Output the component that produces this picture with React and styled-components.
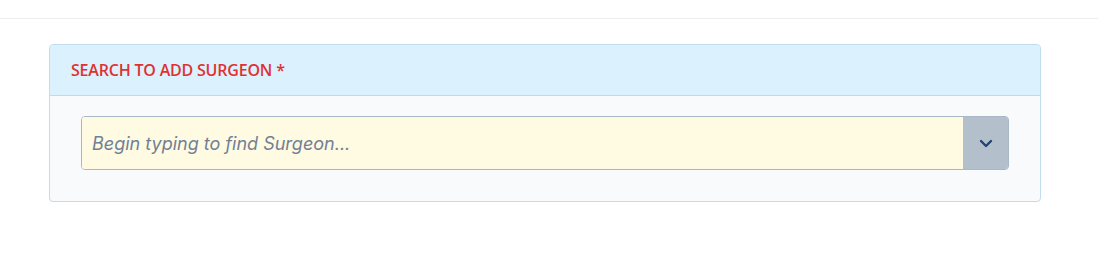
import styled, {createGlobalStyle} from "styled-components";

const GlobalStyle = createGlobalStyle`
    html, body {
        margin:0;
        padding:0;
        background:#ffffff;
    }
`;

const Page = styled.div`
    width:1098px;
    min-height:274px;
    background:#ffffff;
`;

const TopBar = styled.div`
    height:18px;
    border-bottom:1px solid #ededed;
`;

const Content = styled.div`
    padding:25px 57px 0 49px;
`;

const Card = styled.div`
    border:1px solid #bfdcf0;
    border-radius:4px;
    overflow:hidden;
    background:#f8fafc;
`;

const CardHeader = styled.div`
    height:50px;
    display:flex;
    align-items:center;
    padding:0 21px;
    background:#dbf1fd;
    border-bottom:1px solid #bddcf0;
`;

const CardTitle = styled.div`
    font-family:"Open Sans", "Noto Sans", sans-serif;
    font-weight:600;
    font-size:16px;
    letter-spacing:-0.2px;
    text-transform:uppercase;
    color:#e03131;
`;

const CardBody = styled.div`
    padding:20px 31px 31px;
`;

const SelectBox = styled.div`
    display:flex;
    height:54px;
    border:1px solid #a9b7c6;
    border-radius:4px;
    overflow:hidden;
    box-sizing:border-box;
`;

const SearchInput = styled.input`
    flex:1;
    border:none;
    outline:none;
    padding:0 10px;
    background:#fffbe3;
    font-family:Inter, "Noto Sans", sans-serif;
    font-style:italic;
    font-size:18px;
    color:#4a5568;

    &::placeholder {
        color:#718096;
        opacity:1;
    }
`;

const ToggleButton = styled.button`
    width:45px;
    border:none;
    padding:0;
    background:#b4bfcc;
    display:flex;
    align-items:center;
    justify-content:center;
    color:#23426e;
    cursor:pointer;
`;

const Chevron = () => (
    <svg width="14" height="9" viewBox="0 0 14 9" fill="none">
        <path d="M2 2l5 5 5-5" stroke="currentColor" strokeWidth="2.4" strokeLinecap="round" strokeLinejoin="round" />
    </svg>
);

const App = () => {
    return (
        <>
            <GlobalStyle />
            <Page>
                <TopBar />
                <Content>
                    <Card>
                        <CardHeader>
                            <CardTitle>Search to add Surgeon *</CardTitle>
                        </CardHeader>
                        <CardBody>
                            <SelectBox>
                                <SearchInput placeholder="Begin typing to find Surgeon..." />
                                <ToggleButton type="button"><Chevron /></ToggleButton>
                            </SelectBox>
                        </CardBody>
                    </Card>
                </Content>
            </Page>
        </>
    );
};

export default App;
